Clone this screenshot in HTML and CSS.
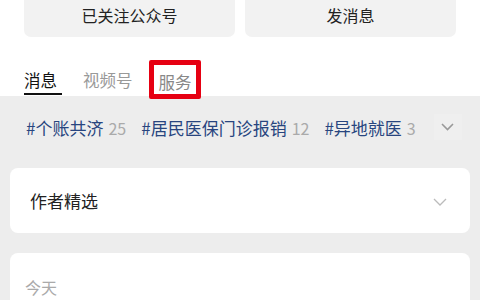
FILE: index.html
```html
<!DOCTYPE html>
<html lang="zh">
<head>
<meta charset="utf-8">
<link rel="stylesheet" href="styles.css">
</head>
<body>
<div class="page">
  <div class="actions">
    <div class="btn">已关注公众号</div>
    <div class="btn">发消息</div>
  </div>
  <div class="tabs">
    <div class="tab active">消息</div>
    <div class="tab">视频号</div>
    <div class="tab service">服务<span class="mark"></span></div>
  </div>
  <div class="content">
    <div class="tags">
      <span class="tag">#个账共济<span class="count">25</span></span>
      <span class="tag">#居民医保门诊报销<span class="count">12</span></span>
      <span class="tag">#异地就医<span class="count">3</span></span>
      <span class="more">
        <svg width="13" height="8" viewBox="0 0 13 8"><path d="M1 1 L6.5 6.5 L12 1" fill="none" stroke="#999" stroke-width="1.6"/></svg>
      </span>
    </div>
    <div class="card pick">
      <span>作者精选</span>
      <svg width="14" height="8" viewBox="0 0 14 8"><path d="M1 1 L7 7 L13 1" fill="none" stroke="#bbb" stroke-width="1.3"/></svg>
    </div>
    <div class="card today">
      <span>今天</span>
    </div>
  </div>
</div>
</body>
</html>
```
FILE: styles.css
```css
* { box-sizing: border-box; }
html, body { margin: 0; padding: 0; }
body {
  width: 480px;
  height: 300px;
  overflow: hidden;
  background: #ffffff;
  font-family: "Noto Sans CJK SC", "Noto Sans", sans-serif;
}
.page { display: flex; flex-direction: column; height: 300px; }
.actions {
  display: flex;
  gap: 10px;
  padding: 0 24px;
}
.btn {
  flex: 1;
  height: 37px;
  background: #f2f2f2;
  border-radius: 0 0 7px 7px;
  text-align: center;
  line-height: 30px;
  font-size: 16px;
  color: #222;
}
.tabs {
  display: flex;
  gap: 26px;
  padding: 31px 0 0 24px;
  height: 59px;
}
.tab {
  position: relative;
  font-size: 16.5px;
  line-height: 24px;
  height: 28px;
  color: #999;
}
.tab.active { color: #111; }
.tab.active::after {
  content: "";
  position: absolute;
  left: 0;
  top: 25px;
  width: 38px;
  height: 2px;
  background: #111;
}
.tab.service { padding-top: 2px; color: #888; }
.mark {
  position: absolute;
  left: -10px;
  top: -8px;
  width: 52px;
  height: 39px;
  border: 5px solid #e60012;
  border-radius: 2px;
}
.content {
  flex: 1;
  background: #ededed;
  display: flex;
  flex-direction: column;
}
.tags {
  display: flex;
  align-items: center;
  gap: 15px;
  padding: 19px 0 0 26px;
  height: 44px;
  white-space: nowrap;
}
.tag {
  font-size: 17px;
  line-height: 24px;
  color: #28457f;
}
.count {
  margin-left: 5px;
  font-size: 16px;
  color: #aaa;
}
.more {
  margin-left: 3px;
  width: 28px;
  height: 26px;
  display: flex;
  align-items: center;
  justify-content: center;
  background: #efefef;
  margin-top: -2px;
}
.card {
  margin: 0 10px;
  background: #fff;
  border-radius: 8px;
}
.pick {
  margin-top: 28px;
  height: 65px;
  display: flex;
  align-items: center;
  justify-content: space-between;
  padding: 0 23px 0 20px;
  font-size: 17px;
  color: #222;
}
.pick svg { margin-top: 2px; }
.today {
  margin-top: 20px;
  flex: 1;
  border-radius: 8px 8px 0 0;
  padding: 24px 0 0 15px;
  font-size: 16px;
  line-height: 20px;
  color: #aaa;
}
```
